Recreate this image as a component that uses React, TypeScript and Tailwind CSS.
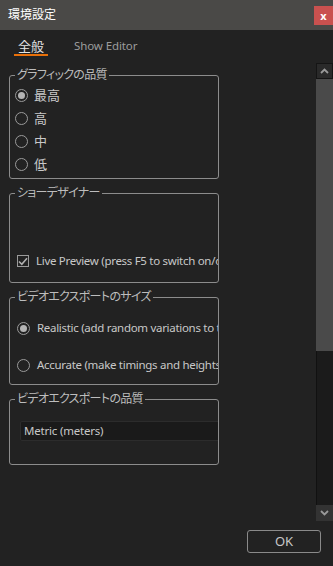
import React from "react";

const Radio = ({ checked }: { checked?: boolean }) => (
  <span className="flex h-[13px] w-[13px] shrink-0 items-center justify-center rounded-full border border-[#9a9a9a]">
    {checked && <span className="h-[7px] w-[7px] rounded-full bg-[#b4b4b4]" />}
  </span>
);

const Group = ({
  title,
  children,
}: {
  title: string;
  children: React.ReactNode;
}) => (
  <fieldset className="w-[210px] min-w-0 rounded-[3px] border border-[#8c8c8c]">
    <legend className="ml-[5px] px-[2px] text-[12px] leading-[16px] tracking-[-0.7px] text-[#bdbdbd] [font-feature-settings:'palt']">
      {title}
    </legend>
    <div className="overflow-hidden">{children}</div>
  </fieldset>
);

const Chevron = ({ up }: { up?: boolean }) => (
  <svg width="9" height="6" viewBox="0 0 9 6">
    <path
      d={up ? "M1 5 L4.5 1.5 L8 5" : "M1 1 L4.5 4.5 L8 1"}
      fill="none"
      stroke="#9a9a9a"
      strokeWidth="1.8"
    />
  </svg>
);

export default function App() {
  return (
    <div className="flex h-[566px] w-[333px] flex-col overflow-hidden bg-[#222222] font-['Noto_Sans','Noto_Sans_CJK_JP',sans-serif] text-[#c8c8c8]">
      {/* Title bar */}
      <div className="flex h-[30px] shrink-0 items-center justify-between bg-[#4a4947]">
        <span className="pl-[8px] text-[12px] text-white">環境設定</span>
        <div className="flex h-[19px] w-[19px] items-center justify-center bg-[#c9514f] text-[11px] font-bold leading-none text-white">
          x
        </div>
      </div>

      {/* Tabs */}
      <div className="flex h-[26px] shrink-0 items-end">
        <div className="ml-[14px] w-[34px] border-b-2 border-[#e8700a] pt-[8px] text-center text-[13px] leading-[16px] text-[#e4e4e4]">
          全般
        </div>
        <div className="ml-[26px] pb-[2px] text-[11.5px] leading-[16px] tracking-[-0.1px] text-[#9c9c9c]">
          Show Editor
        </div>
      </div>

      {/* Main */}
      <div className="flex h-[465px] shrink-0">
        <div className="flex w-[316px] flex-col gap-[6px] pl-[9px] pt-[11px]">
          <Group title="グラフィックの品質">
            <div className="flex flex-col pb-[2px] pt-[1px] text-[13px]">
              {[
                ["最高", true],
                ["高", false],
                ["中", false],
                ["低", false],
              ].map(([label, c]) => (
                <div
                  key={label as string}
                  className="flex h-[23px] items-center gap-[6px] pl-[5px]"
                >
                  <Radio checked={c as boolean} />
                  <span className="text-[#c8c8c8]">{label as string}</span>
                </div>
              ))}
            </div>
          </Group>

          <Group title="ショーデザイナー">
            <div className="pb-[10px] pt-[49px]">
              <div className="flex h-[22px] items-center gap-[7px] whitespace-nowrap pl-[7px] text-[11.5px] tracking-[-0.3px]">
                <span className="flex h-[12px] w-[12px] shrink-0 items-center justify-center border border-[#9a9a9a]">
                  <svg width="10" height="9" viewBox="0 0 10 9">
                    <path
                      d="M1 4.5 L3.8 7.3 L9 1.2"
                      fill="none"
                      stroke="#b0b0b0"
                      strokeWidth="1.6"
                    />
                  </svg>
                </span>
                <span>Live Preview (press F5 to switch on/off)</span>
              </div>
            </div>
          </Group>

          <Group title="ビデオエクスポートのサイズ">
            <div className="flex flex-col gap-[15px] pb-[8px] pt-[12px] text-[11.5px] tracking-[-0.3px]">
              <div className="flex h-[22px] items-center gap-[7px] whitespace-nowrap pl-[7px]">
                <Radio checked />
                <span>Realistic (add random variations to timings)</span>
              </div>
              <div className="flex h-[22px] items-center gap-[7px] whitespace-nowrap pl-[7px]">
                <Radio />
                <span>Accurate (make timings and heights exact)</span>
              </div>
            </div>
          </Group>

          <Group title="ビデオエクスポートの品質">
            <div className="pb-[23px] pt-[14px]">
              <div className="ml-[10px] flex h-[20px] w-[230px] items-center whitespace-nowrap rounded-[2px] border border-[#2c2c2c] bg-[#1a1a1a] pl-[3px] text-[11.5px] tracking-[-0.2px]">
                Metric (meters)
              </div>
            </div>
          </Group>
        </div>

        {/* Scrollbar */}
        <div className="flex w-[17px] flex-col pt-[7px]">
          <div className="flex h-[16px] items-center justify-center border border-[#151515] bg-[#2a2a2a]">
            <Chevron up />
          </div>
          <div className="h-[272px] bg-[#4a4a4a]" />
          <div className="flex-1 border-l border-[#111] bg-[#1b1b1b]" />
          <div className="flex h-[16px] items-center justify-center bg-[#333333]">
            <Chevron />
          </div>
        </div>
      </div>

      {/* Footer */}
      <div className="flex justify-end pr-[12px] pt-[9px]">
        <div className="flex h-[23px] w-[74px] items-center justify-center rounded-[3px] border border-[#8a8a8a] text-[13px] text-[#c8c8c8]">
          OK
        </div>
      </div>
    </div>
  );
}
